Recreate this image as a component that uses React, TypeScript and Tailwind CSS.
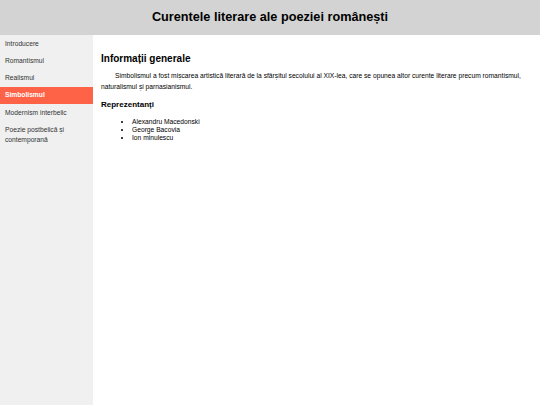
const items = [
  'Introducere',
  'Romantismul',
  'Realismul',
  'Simbolismul',
  'Modernism interbelic',
  'Poezie postbelică și contemporană',
];

export default function App() {
  const active = 'Simbolismul';

  return (
    <div className="flex h-[405px] w-[540px] flex-col bg-white font-['Liberation_Sans',Arial,sans-serif] text-black">
      {/* Header */}
      <header className="flex h-[35px] shrink-0 items-center justify-center bg-[#d3d3d3]">
        <h1 className="text-[12.7px] font-bold">Curentele literare ale poeziei românești</h1>
      </header>

      <div className="flex min-h-0 flex-1">
        {/* Sidebar */}
        <nav className="w-[93px] shrink-0 bg-[#f0f0f0]">
          <ul>
            {items.map((item) => (
              <li
                key={item}
                className={
                  item === active
                    ? 'bg-[#ff6347] px-[5px] py-[3.65px] text-[6.7px] leading-[10px] font-bold text-white'
                    : 'px-[5px] py-[3.65px] text-[6.7px] leading-[10px] text-[#333]'
                }
              >
                {item}
              </li>
            ))}
          </ul>
        </nav>

        {/* Main */}
        <main className="flex-1 px-[8px] pt-[17.5px]">
          <h2 className="text-[10px] leading-[11.5px] font-bold">Informații generale</h2>
          <p className="mt-[7px] indent-[14px] text-[6.7px] leading-[10.5px]">
            Simbolismul a fost mișcarea artistică literară de la sfârșitul secolului al XIX-lea, care se opunea altor
            curente literare precum romantismul, naturalismul și parnasianismul.
          </p>
          <h3 className="mt-[7.5px] text-[8px] leading-[9.2px] font-bold">Reprezentanți</h3>
          <ul className="mt-[9px] list-disc pl-[31px] text-[6.7px] leading-[8px]">
            <li>Alexandru Macedonski</li>
            <li>George Bacovia</li>
            <li>Ion minulescu</li>
          </ul>
        </main>
      </div>
    </div>
  );
}
